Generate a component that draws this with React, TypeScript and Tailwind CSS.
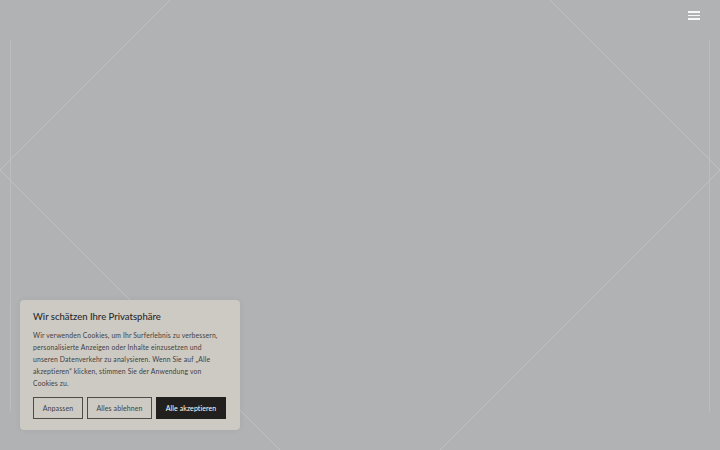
import React from "react";

function Backdrop() {
  // thin diamond lines over the grey hero
  return (
    <svg
      className="absolute inset-0 h-full w-full"
      viewBox="0 0 720 450"
      fill="none"
      stroke="#c1c2c4"
      strokeWidth={1}
    >
      <path d="M170 0 L0 170 L280 450" />
      <path d="M550 0 L720 170 L440 450" />
      <path d="M10.5 40 V412" stroke="#bcbdbf" />
      <path d="M709.5 40 V412" stroke="#bcbdbf" />
    </svg>
  );
}

function CookieBanner() {
  return (
    <div className="absolute bottom-[20px] left-[20px] w-[220px] rounded-[4px] bg-[#cdcac4] px-[13px] pt-[10px] pb-[11px] shadow-[0_0_6px_rgba(0,0,0,0.06)]">
      <h2 className="text-[9.5px] font-medium leading-[14px] text-[#2b2927]">
        Wir schätzen Ihre Privatsphäre
      </h2>
      <p className="mt-[5px] text-[6.8px] leading-[12px] tracking-[0.16px] text-[#44413e]">
        Wir verwenden Cookies, um Ihr Surferlebnis zu verbessern,
        personalisierte Anzeigen oder Inhalte einzusetzen und unseren
        Datenverkehr zu analysieren. Wenn Sie auf „Alle akzeptieren“ klicken,
        stimmen Sie der Anwendung von Cookies zu.
      </p>
      <div className="mt-[8px] flex gap-[4px]">
        <button className="h-[22px] w-[50px] border-[1.5px] border-[#4d4a47] text-[7px] tracking-[0.1px] text-[#44413e]">
          Anpassen
        </button>
        <button className="h-[22px] w-[65px] border-[1.5px] border-[#4d4a47] text-[7px] tracking-[0.1px] text-[#44413e]">
          Alles ablehnen
        </button>
        <button className="h-[22px] w-[70px] bg-[#22201f] text-[7px] tracking-[0.1px] text-white">
          Alle akzeptieren
        </button>
      </div>
    </div>
  );
}

export default function App() {
  return (
    <div
      className="relative h-[450px] w-[720px] overflow-hidden bg-[#b1b2b4]"
      style={{ fontFamily: "Lato, 'Noto Sans', sans-serif" }}
    >
      <Backdrop />
      <header className="relative flex justify-end px-[20px] pt-[11px]">
        <button className="flex w-[12px] flex-col gap-[2px]" aria-label="Menu">
          <span className="h-[1.5px] w-full bg-white/90" />
          <span className="h-[1.5px] w-full bg-white/90" />
          <span className="h-[1.5px] w-full bg-white/90" />
        </button>
      </header>
      <CookieBanner />
    </div>
  );
}
